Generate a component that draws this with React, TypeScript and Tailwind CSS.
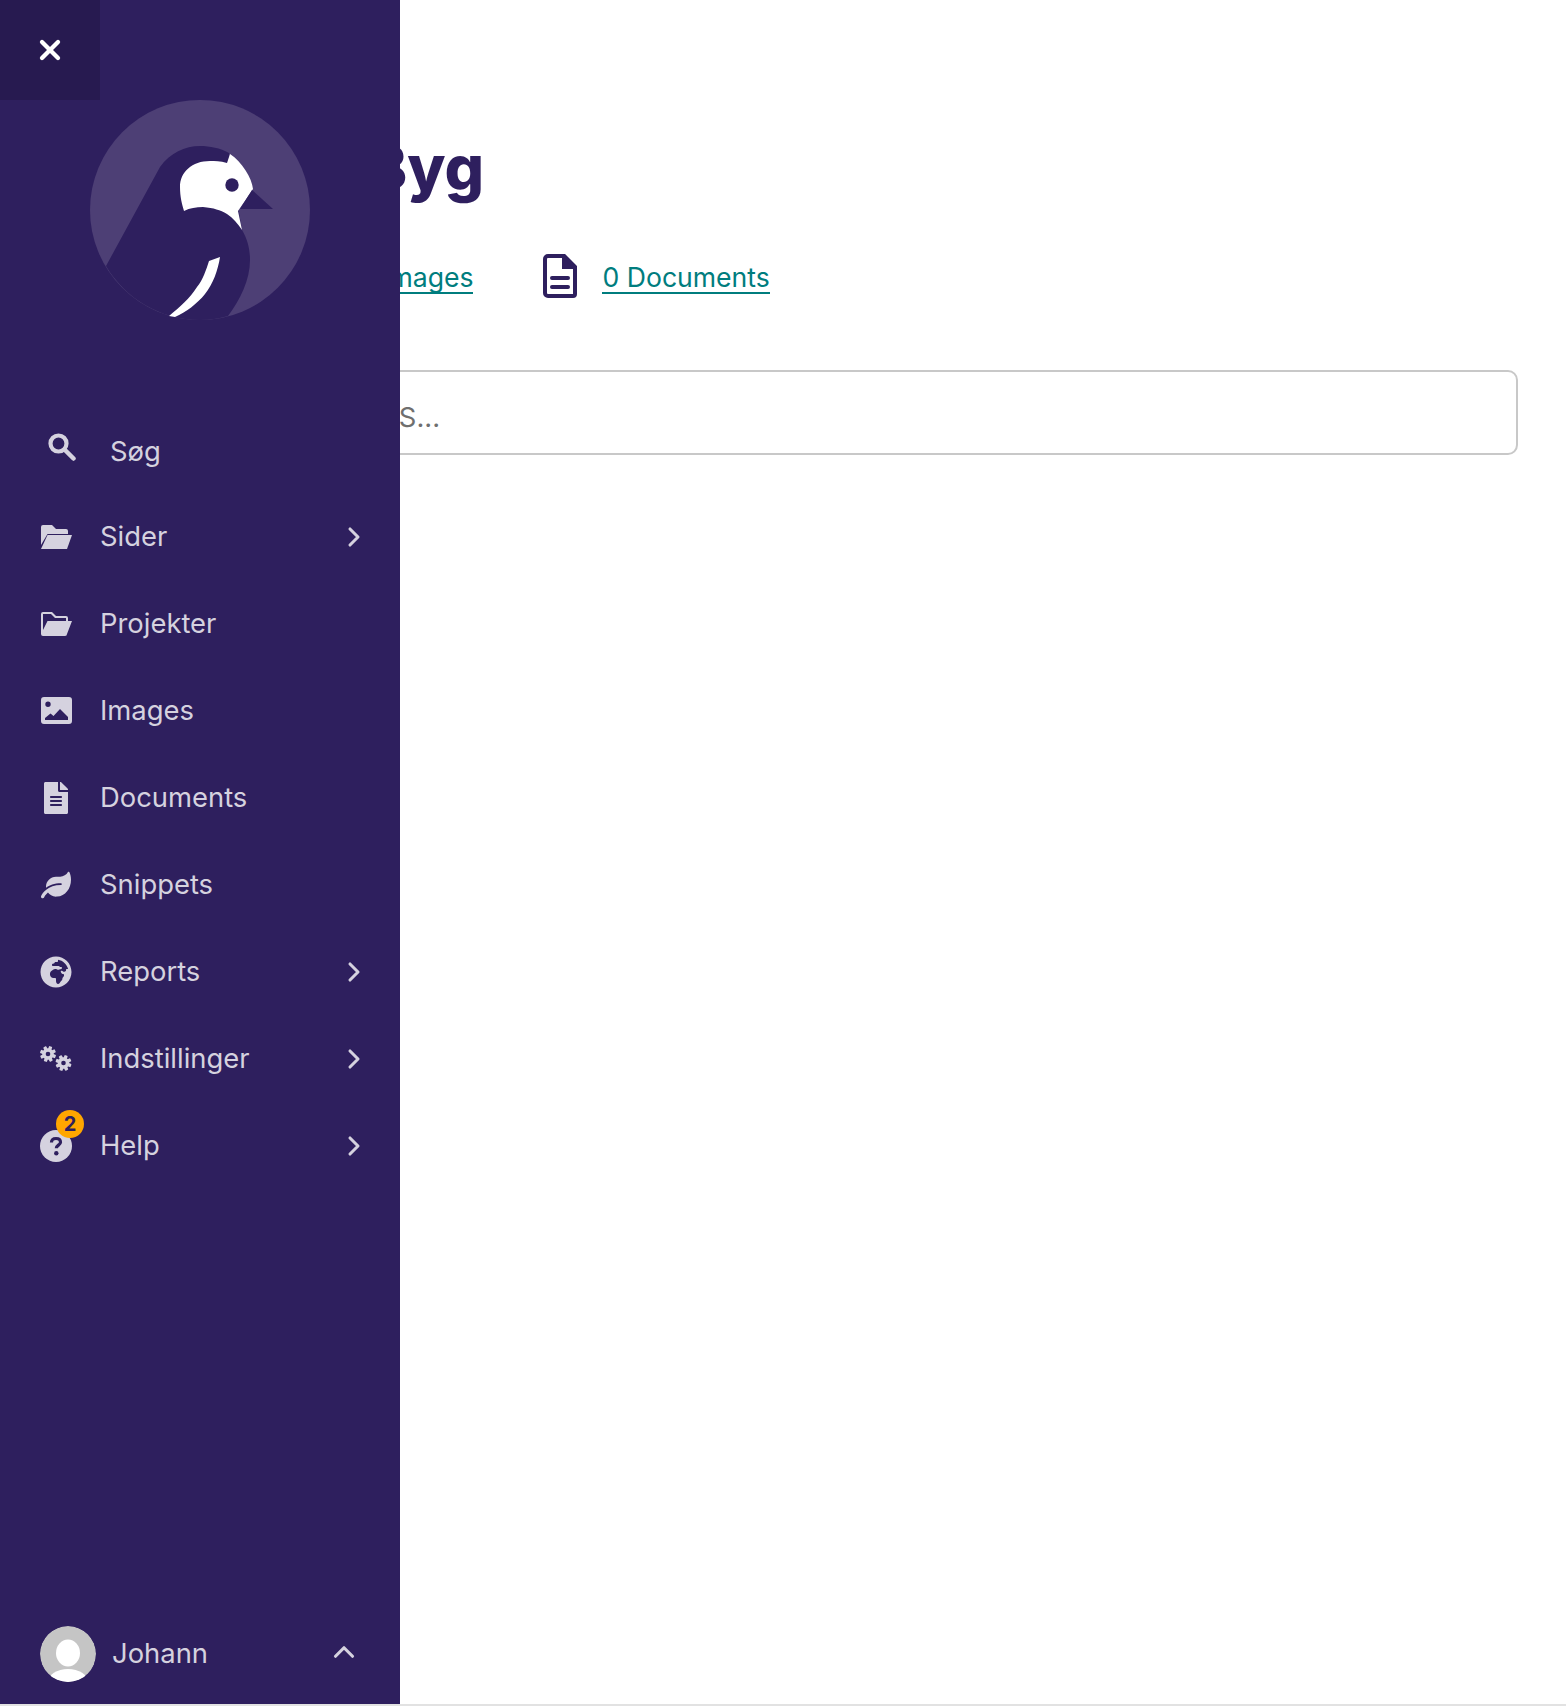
import { useState } from "react";
import { ChevronRight, ChevronUp, X } from "lucide-react";
import { FaFileAlt, FaGlobeAfrica, FaLeaf } from "react-icons/fa";

const FONT = "font-['Inter',sans-serif]";

function SearchIcon() {
  return (
    <svg viewBox="0 0 28 28" className="size-[28px]" fill="none" stroke="currentColor">
      <circle cx="10.500" cy="10.500" r="8" strokeWidth="4.200" />
      <path d="M16.500 16.500 25.500 25.500" strokeWidth="4.500" strokeLinecap="round" />
    </svg>
  );
}

function HelpIcon() {
  return (
    <svg viewBox="0 0 32 32" className="size-[32px]">
      <circle cx="16" cy="16" r="16" fill="currentColor" />
      <path
        d="M11.500 12.500C11.500 9.800 13.500 8.500 16 8.500C18.700 8.500 20.500 10 20.500 12.200C20.500 15 16.300 15.300 16.300 18.300"
        fill="none"
        stroke="#2e1f5e"
        strokeWidth="3.200"
      />
      <circle cx="16.300" cy="23.300" r="2.200" fill="#2e1f5e" />
    </svg>
  );
}

function FolderSolid() {
  return (
    <svg viewBox="0 0 31 24" className="h-6 w-[31px]" fill="currentColor">
      <path d="M0 2a2 2 0 0 1 2-2h9l4 4h10a2 2 0 0 1 2 2v3H6.500L0 20z" />
      <path d="M6.500 10H31l-5 14H0z" />
    </svg>
  );
}

function FolderLine() {
  return (
    <svg viewBox="0 0 31 24" className="h-6 w-[31px]" fill="currentColor">
      <path
        fillRule="evenodd"
        d="M0 2a2 2 0 0 1 2-2h9l4 4h10a2 2 0 0 1 2 2v3h-2V6H14L10 2H2v16L6.500 9H31l-5 13a2 2 0 0 1-2 2H2a2 2 0 0 1-2-2z"
      />
    </svg>
  );
}

function ImageIcon() {
  return (
    <svg viewBox="0 0 31 27" className="h-[27px] w-[31px]" fill="currentColor">
      <path
        fillRule="evenodd"
        d="M3 0h25a3 3 0 0 1 3 3v21a3 3 0 0 1-3 3H3a3 3 0 0 1-3-3V3a3 3 0 0 1 3-3zM7 4.500a2.700 2.700 0 1 0 0 5.400a2.700 2.700 0 0 0 0-5.400zM4 23h23v-3L19 12l-6.500 7-3-2.500L4 21z"
      />
    </svg>
  );
}

function Gear({ cx, cy }: { cx: number; cy: number }) {
  return (
    <g transform={`translate(${cx} ${cy})`}>
      {[0, 45, 90, 135].map((a) => (
        <rect key={a} x="-1.700" y="-8" width="3.400" height="16" rx="0.800" transform={`rotate(${a + 20})`} fill="currentColor" />
      ))}
      <circle r="5.800" fill="currentColor" />
      <circle r="2.300" fill="#2e1f5e" />
    </g>
  );
}

function GearsIcon() {
  return (
    <svg viewBox="0 0 32 26" className="h-[26px] w-[32px]">
      <Gear cx={8} cy={8} />
      <Gear cx={23.500} cy={17} />
    </svg>
  );
}

function Logo() {
  return (
    <svg viewBox="0 0 220 220" className="h-[220px] w-[220px]">
      <circle cx="110" cy="110" r="110" fill="#4d3f75" />
      <path
        d="M16 166 70 67C80 53 95 46 110 46C120 46 130 48 139 53L152 130C158 140 160 150 160 160C160 180 150 200 138 216Q124 220 110 220C70 220 35 198 16 166Z"
        fill="#2e1f5e"
      />
      <path
        d="M140 54 137 63C130 61 125 61 120 61C102 61 90 72 90 87C90 97 92 104 94 111C100 108 106 107 113 107C124 108 130 110 137 114C143 118 148 124 152 130L148 111 163 89C162 78 152 62 140 54Z"
        fill="#fff"
      />
      <circle cx="142" cy="85" r="6.700" fill="#2e1f5e" />
      <path d="M162 90 183 109H150Z" fill="#2e1f5e" />
      <path
        d="M130 157 119 161C116 170 113 180 107 187C100 198 90 207 79 216L85 217C96 212 107 204 115 194C123 184 128 170 130 157Z"
        fill="#fff"
      />
    </svg>
  );
}

const items = [
  { label: "Sider", icon: <FolderSolid />, more: true },
  { label: "Projekter", icon: <FolderLine /> },
  { label: "Images", icon: <ImageIcon /> },
  { label: "Documents", icon: <FaFileAlt size={32} /> },
  { label: "Snippets", icon: <FaLeaf size={30} /> },
  { label: "Reports", icon: <FaGlobeAfrica size={32} />, more: true },
  { label: "Indstillinger", icon: <GearsIcon />, more: true },
  { label: "Help", icon: <HelpIcon />, more: true, badge: 2 },
];

function Sidebar() {
  return (
    <aside className="absolute left-0 top-0 flex h-[1706px] w-[400px] flex-col bg-[#2e1f5e] text-[27.400px] text-[#d5d2df]">
      <button type="button" className="flex size-[100px] shrink-0 items-center justify-center bg-[#271a50] text-white">
        <X size={32} strokeWidth={3.200} />
      </button>
      <div className="flex justify-center">
        <Logo />
      </div>
      <form className="mt-[92px] flex h-[81px] items-start px-[48px]">
        <span className="mt-[21px]">
          <SearchIcon />
        </span>
        <span className="ml-[34px] mt-[19px] leading-[40px]">Søg</span>
      </form>
      <nav className="flex flex-col">
        {items.map((item) => (
          <a key={item.label} className="relative flex h-[87px] items-center pl-[40px] pr-[30px]">
            <span className="relative flex w-[32px] justify-center">
              {item.icon}
              {item.badge && (
                <span className="absolute -right-[12px] -top-[20px] flex size-[28px] items-center justify-center rounded-full bg-[#ffa600] text-[20px] font-bold text-[#2e1f5e]">
                  {item.badge}
                </span>
              )}
            </span>
            <span className="ml-[28px] flex-1">{item.label}</span>
            {item.more && <ChevronRight size={32} strokeWidth={2.300} />}
          </a>
        ))}
      </nav>
      <div className="mt-auto flex items-center pb-[24px] pl-[40px] pr-[39px]">
        <svg viewBox="0 0 56 56" className="size-[56px] rounded-full">
          <circle cx="28" cy="28" r="28" fill="#c5c5c5" />
          <ellipse cx="28" cy="27" rx="12" ry="13.500" fill="#fff" />
          <ellipse cx="28" cy="56" rx="20" ry="13" fill="#fff" />
        </svg>
        <span className="ml-[16px] flex-1">Johann</span>
        <ChevronUp size={34} strokeWidth={2.200} className="-mt-[4px]" />
      </div>
    </aside>
  );
}

export default function App() {
  const [query, setQuery] = useState("");
  return (
    <div className={`relative h-[1706px] overflow-hidden border-b-2 border-[#e2e2e2] bg-white ${FONT}`}>
      <main className="pl-[250px] pr-[48px] pt-[132px]">
        <h1 className="pl-[116px] text-[62px] font-extrabold leading-[72px] text-[#2e1f5e]">Byg</h1>
        <div className="mt-[50px] flex items-center text-[26.600px] text-[#007d7e]">
          <a className="ml-[108px] mt-[4px] border-b-2 border-[#007d7e] leading-[30px]">0 Images</a>
          <svg viewBox="0 0 34 44" className="ml-[70px] h-[44px] w-[34px]" fill="none" stroke="#2e1f5e" strokeWidth="4">
            <path d="M5 2h16l11 11v27a2 2 0 0 1-2 2H5a3 3 0 0 1-3-3V5a3 3 0 0 1 3-3z" />
            <path d="M21 2v11h11z" fill="#2e1f5e" />
            <path d="M9 24h16M9 33h16" strokeLinecap="round" />
          </svg>
          <a className="ml-[25px] mt-[4px] border-b-2 border-[#007d7e] leading-[30px]">0 Documents</a>
        </div>
        <input
          value={query}
          onChange={(e) => setQuery(e.target.value)}
          placeholder="Søg PAGES..."
          className="mt-[72px] h-[85px] w-full rounded-[10px] border-2 border-[#c8c8c8] bg-white pl-[18px] pr-[16px] pt-[8px] text-[27.400px] outline-none placeholder:text-[#6f6f6f]"
        />
      </main>
      <Sidebar />
    </div>
  );
}
